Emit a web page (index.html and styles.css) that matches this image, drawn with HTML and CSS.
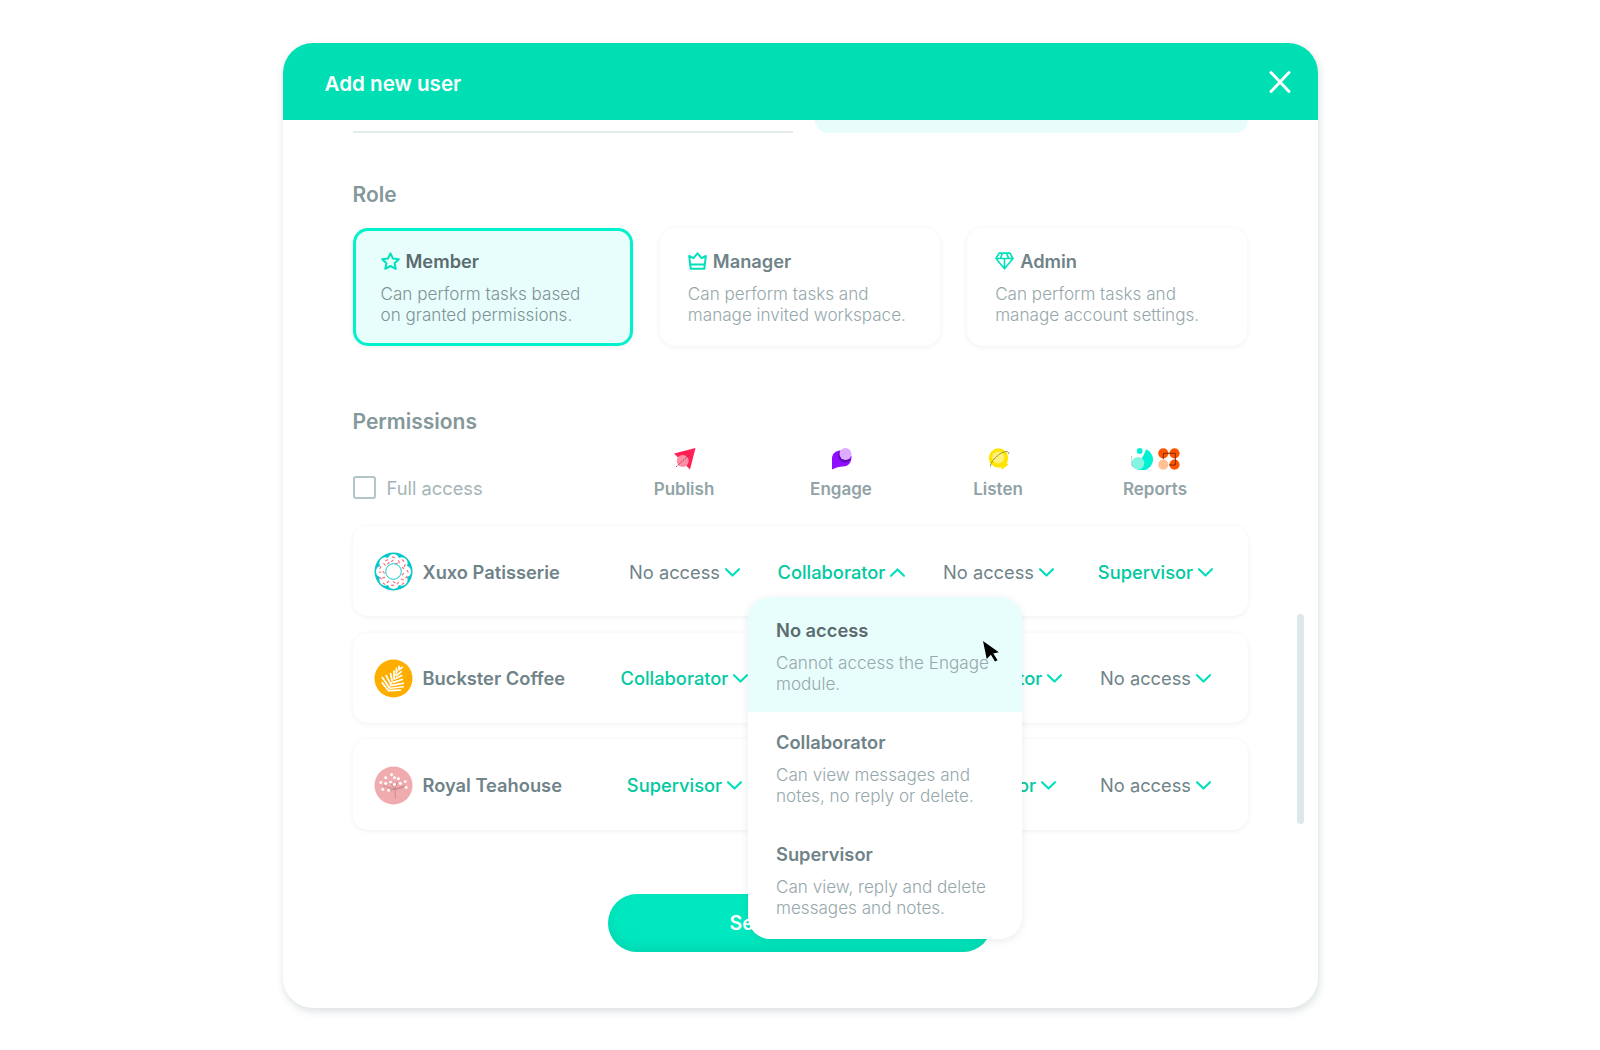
FILE: index.html
```html
<!DOCTYPE html>
<html lang="en">
<head>
    <meta charset="UTF-8">
    <meta name="viewport" content="width=device-width, initial-scale=1.0">
    <title>Add new user</title>
    <link rel="stylesheet" href="styles.css">
</head>
<body>
    <svg width="0" height="0" class="defs">
        <symbol id="chevron" viewBox="0 0 15 9">
            <path d="M1 1.2 L7.5 7.6 L14 1.2" fill="none" stroke="#00e0bb" stroke-width="2.1" stroke-linecap="round" stroke-linejoin="round"/>
        </symbol>
    </svg>

    <div class="modal">
        <div class="modal-header">
            <h1>Add new user</h1>
            <svg class="close" viewBox="0 0 22 22"><path d="M2 1.5 L20 20.5 M20 1.5 L2 20.5" stroke="#fff" stroke-width="2.9" stroke-linecap="round"/></svg>
        </div>

        <div class="modal-body">
            <div class="previous">
                <div class="input-line"></div>
                <div class="hint"></div>
            </div>

            <h2>Role</h2>
            <div class="roles">
                <div class="role selected">
                    <h3>
                        <svg viewBox="0 0 19 18"><path d="M9.5 1.4 L12 6.6 L17.8 7.3 L13.6 11.2 L14.7 16.8 L9.5 14 L4.3 16.8 L5.4 11.2 L1.2 7.3 L7 6.6 Z"/></svg>
                        <span>Member</span>
                    </h3>
                    <p>Can perform tasks based<br>on granted permissions.</p>
                </div>
                <div class="role">
                    <h3>
                        <svg viewBox="0 0 19 18"><path d="M1.2 4 L5.5 6.2 L9.5 1.3 L13.5 6.2 L17.8 4 L16.3 16.8 H2.7 Z M2.2 12.4 H16.8"/></svg>
                        <span>Manager</span>
                    </h3>
                    <p>Can perform tasks and<br>manage invited workspace.</p>
                </div>
                <div class="role">
                    <h3>
                        <svg class="gem" viewBox="0 0 19 18"><path d="M4 1.1 H15 L18 6.5 L9.5 16.8 L1 6.5 Z M1 6.5 H18 M9.5 6.5 V16.8 M5.5 6.3 L7.4 1.4 M13.5 6.3 L11.6 1.4"/></svg>
                        <span>Admin</span>
                    </h3>
                    <p>Can perform tasks and<br>manage account settings.</p>
                </div>
            </div>

            <h2>Permissions</h2>
            <div class="modules">
                <label class="full-access"><span class="checkbox"></span>Full access</label>
                <div class="module">
                    <div class="module-icons">
                        <svg viewBox="0 0 22 22"><path d="M0 5.5 L21.5 0 L16 21.5 Z" fill="#ff2056"/><circle cx="8.7" cy="13" r="6" fill="#ff8fa5"/><path d="M2 19 L15 7" stroke="#8c2444" stroke-width=".8" stroke-dasharray="2 1"/></svg>
                    </div>
                    Publish
                </div>
                <div class="module">
                    <div class="module-icons">
                        <svg viewBox="0 0 22 22"><path d="M1 21.5 V11 C1 6 4.500 2.800 9 2.600 L20.5 8 C20.500 14 18 18.5 12 18.5 C8 18.5 5 19.5 1 21.5 Z" fill="#8f0fff"/><path d="M8.2 4 A6.6 6.6 0 0 0 20 11 Z" fill="#6209b5"/><circle cx="14.5" cy="6" r="6" fill="#dbacff"/></svg>
                    </div>
                    Engage
                </div>
                <div class="module">
                    <div class="module-icons">
                        <svg viewBox="0 0 22 22"><circle cx="10.5" cy="10" r="9.7" fill="#ffe500"/><path d="M12 17 L17 14 L20.5 16.5 L14 21.5 Z" fill="#ffe500"/><circle cx="10.2" cy="9.5" r="6" fill="#fff27a"/><path d="M2.5 18.5 C2 13 14 1.5 20.5 4 C21.3 4.6 20.8 5.5 20 6" fill="none" stroke="#776c2c" stroke-width=".8" stroke-dasharray="3 .6"/></svg>
                    </div>
                    Listen
                </div>
                <div class="module">
                    <div class="module-icons">
                        <svg viewBox="0 0 22 22"><path d="M15 1.2 A11 11 0 1 1 1.5 17 C8 16 13 8 15 1.2 Z" fill="#00f2d2"/><circle cx="8.7" cy="3" r="2.9" fill="#00f2d2"/><circle cx="7" cy="15.2" r="6.3" fill="#83f5e2"/><path d="M.6 8 V18 H2" fill="none" stroke="#8ca0a0" stroke-width=".7" stroke-dasharray="1.5 1"/></svg>
                        <svg viewBox="0 0 22 22"><circle cx="5.3" cy="5.3" r="5.1" fill="#ff5500"/><circle cx="16.5" cy="5.3" r="5.1" fill="#ff5500"/><circle cx="16.5" cy="16.6" r="5.1" fill="#ff5500"/><path d="M5.3 11 V5.3 H17.3 V17 H11" fill="none" stroke="#7a2c08" stroke-width="1"/><circle cx="5.3" cy="16.6" r="5.1" fill="#ffc194"/></svg>
                    </div>
                    Reports
                </div>
            </div>

            <div class="workspaces">
                <div class="workspace">
                    <div class="name">
                        <svg viewBox="0 0 40 40">
                            <circle cx="20" cy="20" r="19.5" fill="#07c8c8"/>
                            <g fill="#fff">
                                <circle cx="20" cy="20" r="15"/>
                                <circle cx="20" cy="8" r="6"/><circle cx="28.500" cy="11.500" r="6"/><circle cx="32" cy="20" r="6"/><circle cx="28.500" cy="28.500" r="6"/>
                                <circle cx="20" cy="32" r="6"/><circle cx="11.500" cy="28.500" r="6"/><circle cx="8" cy="20" r="6"/><circle cx="11.500" cy="11.500" r="6"/>
                            </g>
                            <path d="M19 5 l2 1 M25 9 l1 2 M29 8 l1.500 1.500 M14 8 l-2 1 M18 9.500 l1.500 -1 M10 12 l1.500 1.500 M7 15 l-1 2 M32 13 l-1 2 M29 16 l1.500 1 M34 19 l1 1.800 M30.500 22 l-1.500 1.500 M34 25 l-1.500 1.500 M28 28 l2 .5 M25 31 l-1 1.800 M29 33 l1.500 -1 M20 30.500 l1.500 1 M18 34 l2 .3 M15 30 l-1.500 1.500 M11 33 l-1.500 -1 M11 26 l-2 .5 M6 26 l1.500 1.500 M9.500 20 l1 1.800 M5.500 21 l1.500 -.5 M14 12 l1.500 -1 M22 12 l2 -.5" stroke="#ff6b82" stroke-width="1.200" stroke-linecap="round"/>
                            <circle cx="20" cy="20" r="8" fill="#fff" stroke="#07c8c8" stroke-width="1"/>
                        </svg>
                        <span>Xuxo Patisserie</span>
                    </div>
                    <div class="access">No access <svg><use href="#chevron"/></svg></div>
                    <div class="access granted open">Collaborator <svg><use href="#chevron"/></svg>
                        <div class="menu">
                            <div class="option hovered">
                                <h4>No access</h4>
                                <p>Cannot access the Engage<br>module.</p>
                                <svg class="cursor" viewBox="0 0 17 22"><path d="M0 0 L15.800 11.200 L10.300 12.500 L14.600 19.200 L12 20.600 L7.900 13.700 L3.700 18 Z" fill="#000"/></svg>
                            </div>
                            <div class="option">
                                <h4>Collaborator</h4>
                                <p>Can view messages and<br>notes, no reply or delete.</p>
                            </div>
                            <div class="option">
                                <h4>Supervisor</h4>
                                <p>Can view, reply and delete<br>messages and notes.</p>
                            </div>
                        </div>
                    </div>
                    <div class="access">No access <svg><use href="#chevron"/></svg></div>
                    <div class="access granted">Supervisor <svg><use href="#chevron"/></svg></div>
                </div>

                <div class="workspace">
                    <div class="name">
                        <svg viewBox="0 0 40 40">
                            <circle cx="20" cy="20" r="19.5" fill="#ffae00"/>
                            <g fill="none" stroke="#fff" stroke-linecap="round">
                                <path d="M15 33 C17 25 21 16 27 8.500" stroke-width="1"/>
                                <path d="M14.500 32 L8.500 24.500 M15.500 29 L8.500 19 M17 25.500 L12.500 17 M18.500 22 L17 15 M20.500 18.500 L20.500 12.500 M23 14 L23 9.500 M26 10 L25.500 7.500" stroke-width="1.800"/>
                                <path d="M16 32.500 L27 32 M17 30 L30 28.500 M18 27 L30 25 M19.500 24 L29 21 M21 20.500 L28.500 17 M23 17 L28 13 M26 11 L29 8.500" stroke-width="1.700"/>
                            </g>
                        </svg>
                        <span>Buckster Coffee</span>
                    </div>
                    <div class="access granted">Collaborator <svg><use href="#chevron"/></svg></div>
                    <div class="access granted">Collaborator <svg><use href="#chevron"/></svg></div>
                    <div class="access granted">Collaborator <svg><use href="#chevron"/></svg></div>
                    <div class="access">No access <svg><use href="#chevron"/></svg></div>
                </div>

                <div class="workspace">
                    <div class="name">
                        <svg viewBox="0 0 40 40">
                            <circle cx="20" cy="20" r="19.5" fill="#f0abae"/>
                            <path d="M22 33 L21.500 24 L9 20 M21.500 24 L16 16 M21.500 24 L24 16 M21.500 24 L32 20 M16 25 L21.500 24 L30 22" stroke="#c08388" stroke-width=".8" fill="none"/>
                            <g fill="#fff"><circle cx="18" cy="9" r="1.500"/><circle cx="12" cy="12" r="1.500"/><circle cx="7" cy="17" r="1.500"/><circle cx="12" cy="18" r="1.500"/><circle cx="17" cy="16.500" r="1.500"/><circle cx="21" cy="12" r="1.500"/><circle cx="25" cy="13" r="1.500"/><circle cx="21" cy="19" r="1.500"/><circle cx="27" cy="18" r="1.500"/><circle cx="32" cy="16" r="1.500"/><circle cx="33" cy="22" r="1.500"/><circle cx="9" cy="24" r="1.500"/><circle cx="15" cy="25" r="1.500"/></g>
                        </svg>
                        <span>Royal Teahouse</span>
                    </div>
                    <div class="access granted">Supervisor <svg><use href="#chevron"/></svg></div>
                    <div class="access granted">Supervisor <svg><use href="#chevron"/></svg></div>
                    <div class="access granted">Supervisor <svg><use href="#chevron"/></svg></div>
                    <div class="access">No access <svg><use href="#chevron"/></svg></div>
                </div>
            </div>

            <button class="send">Send invitation</button>
            <div class="scrollbar"></div>
        </div>
    </div>
</body>
</html>
```
FILE: styles.css
```css
* {
    box-sizing: border-box;
}
body {
    margin: 0;
    padding-top: 43px;
    height: 1050px;
    background-color: #fff;
    font-family: Inter, "Liberation Sans", sans-serif;
    color: #6f8388;
    overflow: hidden;
}
h1, h2, h3, h4, p {
    margin: 0;
}
.defs {
    position: absolute;
}
.modal {
    width: 1035px;
    height: 965px;
    margin: 0 auto;
    border-radius: 30px;
    background-color: #fff;
    box-shadow: 1px 3px 8px rgba(40, 80, 85, 0.18);
}
.modal-header {
    display: flex;
    align-items: center;
    justify-content: space-between;
    height: 77px;
    padding: 0 27px 0 42px;
    border-radius: 30px 30px 0 0;
    background-color: #00dfb4;
}
.modal-header h1 {
    color: #fff;
    font-size: 20.6px;
    font-weight: 600;
    line-height: 26px;
    margin-top: 4px;
}
.close {
    width: 22px;
    height: 22px;
}
.modal-body {
    position: relative;
    padding: 0 70px;
}
.previous {
    display: flex;
    justify-content: space-between;
    height: 13px;
}
.input-line {
    width: 440px;
    border-bottom: 2px solid #e3ebed;
}
.hint {
    width: 433px;
    border-radius: 0 0 14px 14px;
    background-color: #e8fdfa;
}
h2 {
    font-size: 21px;
    font-weight: 600;
    line-height: 26px;
    color: #84989b;
}
.previous + h2 {
    margin-top: 49px;
}
.roles {
    display: flex;
    gap: 27px;
    margin: 20px 0 63px;
}
.role {
    flex: 1;
    height: 118px;
    padding: 22px 28px;
    border-radius: 15px;
    box-shadow: 0 1px 5px rgba(40, 60, 60, 0.08);
}
.role h3 {
    display: flex;
    align-items: center;
    gap: 6px;
    font-size: 18.3px;
    font-weight: 600;
    line-height: 22px;
}
.role svg {
    width: 19px;
    height: 18px;
    fill: none;
    stroke: #00e0bb;
    stroke-width: 2;
    stroke-linejoin: round;
}
.role .gem {
    stroke-width: 1.6;
}
.role p,
.option p {
    font-size: 17.1px;
    font-weight: 300;
    line-height: 21.2px;
    color: #96a8ab;
    white-space: nowrap;
}
.role p {
    margin-top: 11px;
}
.role.selected {
    padding: 19px 25px;
    border: 3px solid #00f2cc;
    background-color: #e8fefc;
    color: #5c6b6f;
}
.selected p {
    color: #809295;
}
.modules {
    display: flex;
    height: 91px;
    padding: 13px 13px 0 0;
}
.full-access {
    display: flex;
    align-items: center;
    gap: 11px;
    width: 253px;
    height: 23px;
    margin-top: 28px;
    font-size: 18.3px;
    color: #a5b4b7;
}
.checkbox {
    width: 23px;
    height: 23px;
    border: 2px solid #b3c5c8;
    border-radius: 3px;
}
.module {
    width: 157px;
    font-size: 17px;
    font-weight: 600;
    line-height: 22px;
    text-align: center;
    color: #91a3a6;
}
.module-icons {
    display: flex;
    justify-content: center;
    gap: 5px;
    height: 30px;
    padding-left: 1px;
}
.module-icons svg {
    width: 22px;
    height: 22px;
}
.workspaces {
    display: flex;
    flex-direction: column;
    gap: 16.5px;
}
.workspace {
    display: flex;
    align-items: center;
    height: 90px;
    padding: 1px 13px 0 21px;
    border-radius: 15px;
    box-shadow: 0 1px 5px rgba(40, 60, 60, 0.08);
}
.workspace:last-child {
    height: 91px;
}
.name {
    display: flex;
    align-items: center;
    gap: 10px;
    width: 232.5px;
    font-size: 18.3px;
    font-weight: 600;
}
.name svg {
    width: 39px;
    height: 39px;
}
.access {
    position: relative;
    display: flex;
    align-items: center;
    justify-content: center;
    gap: 5px;
    width: 157px;
    font-size: 18.3px;
    line-height: 22px;
    white-space: nowrap;
}
.access > svg {
    width: 15px;
    height: 9px;
    margin-top: 1px;
}
.granted {
    font-weight: 500;
    color: #00c9a0;
}
.open > svg {
    transform: rotate(180deg);
}
.menu {
    position: absolute;
    top: 36px;
    left: -15px;
    z-index: 2;
    width: 274px;
    padding-bottom: 3px;
    border-radius: 22px;
    background-color: #fff;
    box-shadow: 0 2px 8px rgba(40, 60, 60, 0.1);
    overflow: hidden;
}
.option {
    position: relative;
    height: 112px;
    padding: 19px 28px 0;
    font-weight: 400;
}
.option h4 {
    margin-bottom: 11px;
    font-size: 18.3px;
    font-weight: 600;
    line-height: 22px;
    color: #6f8388;
}
.option.hovered {
    height: 115px;
    padding-top: 22px;
    background-color: #e8fefc;
}
.hovered h4 {
    color: #5c6b6f;
}
.cursor {
    position: absolute;
    top: 44px;
    left: 235px;
    width: 17px;
    height: 22px;
}
.send {
    display: block;
    width: 384px;
    height: 58px;
    margin: 64px auto 0;
    border: 0;
    border-radius: 29px;
    background-color: #00e8bf;
    box-shadow: inset 0 -5px 12px rgba(0, 180, 150, 0.35);
    color: #fff;
    font-family: inherit;
    font-size: 19.6px;
    font-weight: 600;
}
.scrollbar {
    position: absolute;
    top: 494px;
    right: 14px;
    width: 7px;
    height: 210px;
    border-radius: 4px;
    background-color: #dde8ea;
}
```
